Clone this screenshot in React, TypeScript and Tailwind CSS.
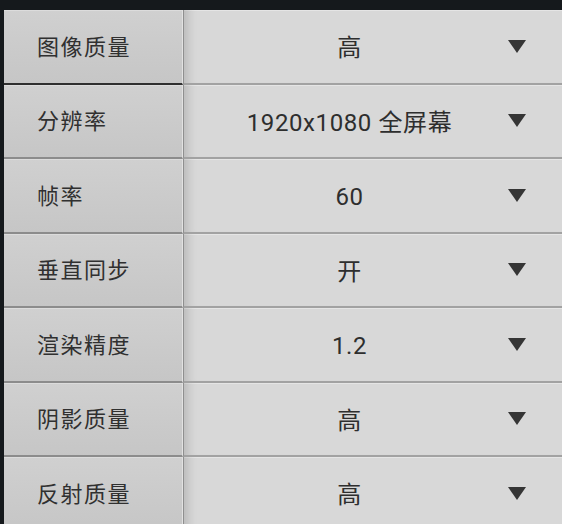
const rows = [
  { label: "图像质量", value: "高", active: true },
  { label: "分辨率", value: "1920x1080 全屏幕" },
  { label: "帧率", value: "60" },
  { label: "垂直同步", value: "开" },
  { label: "渲染精度", value: "1.2" },
  { label: "阴影质量", value: "高" },
  { label: "反射质量", value: "高" },
];

function Caret() {
  return (
    <svg width="18" height="13" viewBox="0 0 18 13" className="shrink-0">
      <path d="M0 0 H18 L9 13 Z" fill="#353535" />
    </svg>
  );
}

export default function App() {
  return (
    <div
      className="w-[562px] h-[524px] overflow-hidden bg-[#15191c] pt-[10px] pl-[4px]"
      style={{ fontFamily: 'Roboto, "Noto Sans CJK SC", sans-serif' }}
    >
      <div className="flex flex-col bg-[#d8d8d8]">
        {rows.map((row) => (
          <div key={row.label} className="flex h-[74.5px] shrink-0">
            <div
              className={`w-[179px] flex items-center pl-[33px] pt-[2px] bg-gradient-to-b from-[#d0d0d0] to-[#c6c6c6] border-r border-r-[#e2e2e2] shadow-[inset_0_1px_0_#dcdcdc] ${
                row.active ? "border-b-2 border-b-[#2f2f2f]" : "border-b-2 border-b-[#8c8c8c]"
              }`}
            >
              <span className="text-[22px] tracking-[1.5px] text-[#303030]">{row.label}</span>
            </div>
            <div className="flex-1 flex items-center border-l border-l-[#8f8f8f] border-b-2 border-b-[#a2a2a2] bg-[#d8d8d8] shadow-[inset_12px_0_10px_-8px_rgba(0,0,0,0.14),inset_0_1px_0_#e6e6e6]">
              <span className="flex-1 ml-[7px] pt-[4px] text-center text-[24px] leading-none tracking-[0.6px] text-[#2e2e2e]">
                {row.value}
              </span>
              <div className="mr-[36px]">
                <Caret />
              </div>
            </div>
          </div>
        ))}
      </div>
    </div>
  );
}
